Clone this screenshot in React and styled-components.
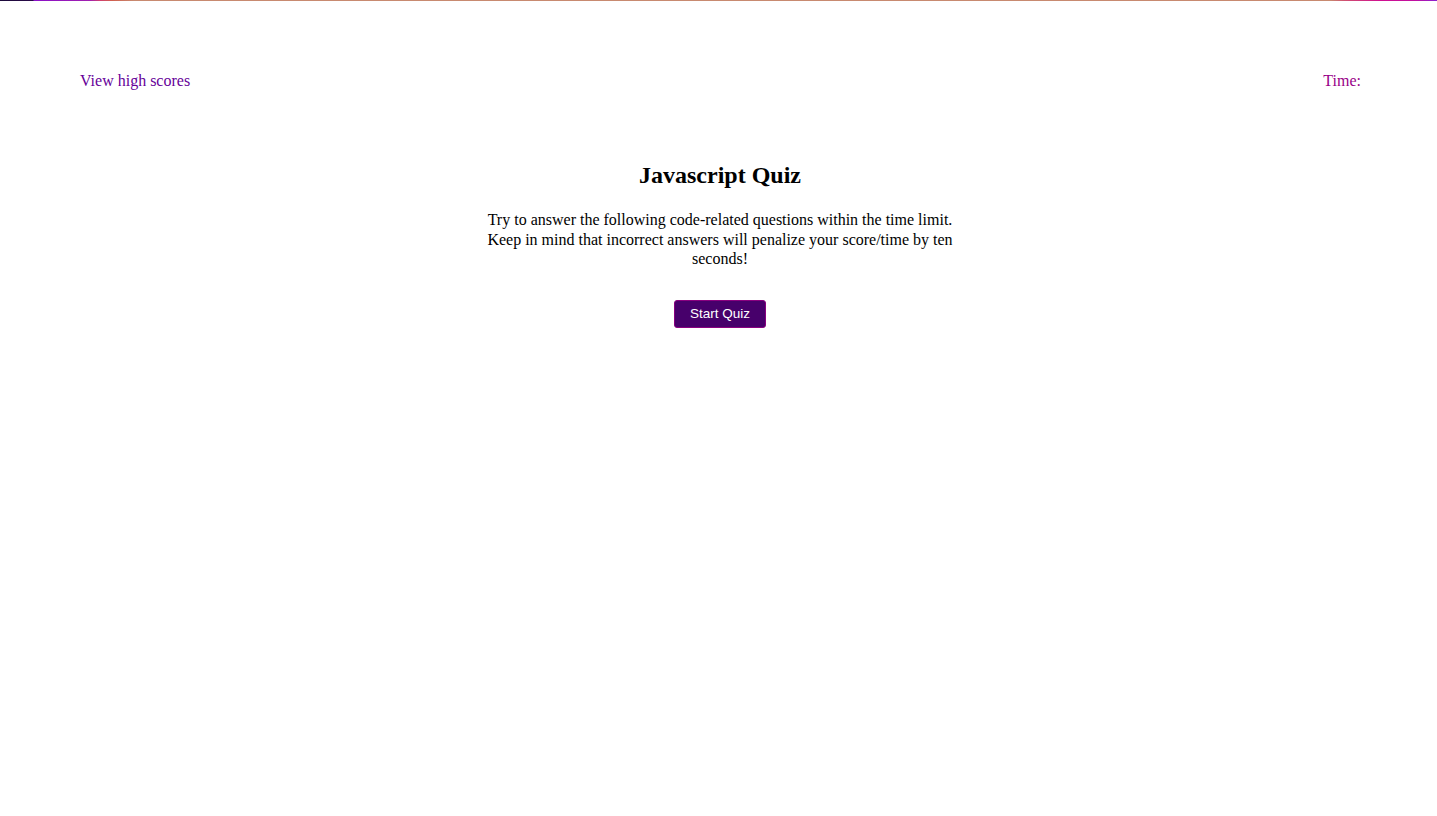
import React from 'react';
import styled, { createGlobalStyle } from 'styled-components';

const GlobalStyle = createGlobalStyle`
  html, body {
    margin: 0;
    padding: 0;
    background: #fff;
  }
  body {
    font-family: "Liberation Serif", "Times New Roman", serif;
    font-size: 16px;
    color: #000;
  }
`;

// thin coloured strip along the top edge
const TopLine = styled.div`
  height: 1px;
  background: linear-gradient(
    to right,
    #1c0a3a 0px,
    #2a0a48 33px,
    #8a10c8 34px,
    #a020b0 90px,
    #d04070 100px,
    #d06050 112px,
    #c88a70 134px,
    #c88a70 1330px,
    #d05070 1345px,
    #d01090 1380px,
    #c010a0 1415px,
    #8a20d0 1437px
  );
`;

const Page = styled.div`
  min-height: 815px;
`;

const Header = styled.header`
  display: flex;
  justify-content: space-between;
  align-items: center;
  padding: 71px 76px 0 80px;
  line-height: 18px;
`;

const HighScores = styled.a`
  color: #660099;
  text-decoration: none;
  cursor: pointer;
`;

const Timer = styled.span`
  color: #990088;
`;

const Main = styled.main`
  display: flex;
  flex-direction: column;
  align-items: center;
  text-align: center;
  padding: 71px 0 0 3px;
`;

const Title = styled.h2`
  margin: 0;
  font-size: 24px;
  font-weight: bold;
  line-height: 28px;
`;

const Intro = styled.p`
  width: 480px;
  margin: 21px 0 0;
  line-height: 19.5px;
`;

const StartButton = styled.button`
  margin-top: 31px;
  height: 28px;
  padding: 0 15px;
  background: #47006b;
  color: #fff;
  border: 1px solid #8a0080;
  border-radius: 3px;
  font-family: "Liberation Sans", Arial, sans-serif;
  font-size: 13.5px;
  cursor: pointer;
`;

export default function App() {
  return (
    <>
      <GlobalStyle />
      <Page>
        <TopLine />
        <Header>
          <HighScores>View high scores</HighScores>
          <Timer>Time:</Timer>
        </Header>
        <Main>
          <Title>Javascript Quiz</Title>
          <Intro>
            Try to answer the following code-related questions within the time
            limit. Keep in mind that incorrect answers will penalize your
            score/time by ten seconds!
          </Intro>
          <StartButton>Start Quiz</StartButton>
        </Main>
      </Page>
    </>
  );
}
